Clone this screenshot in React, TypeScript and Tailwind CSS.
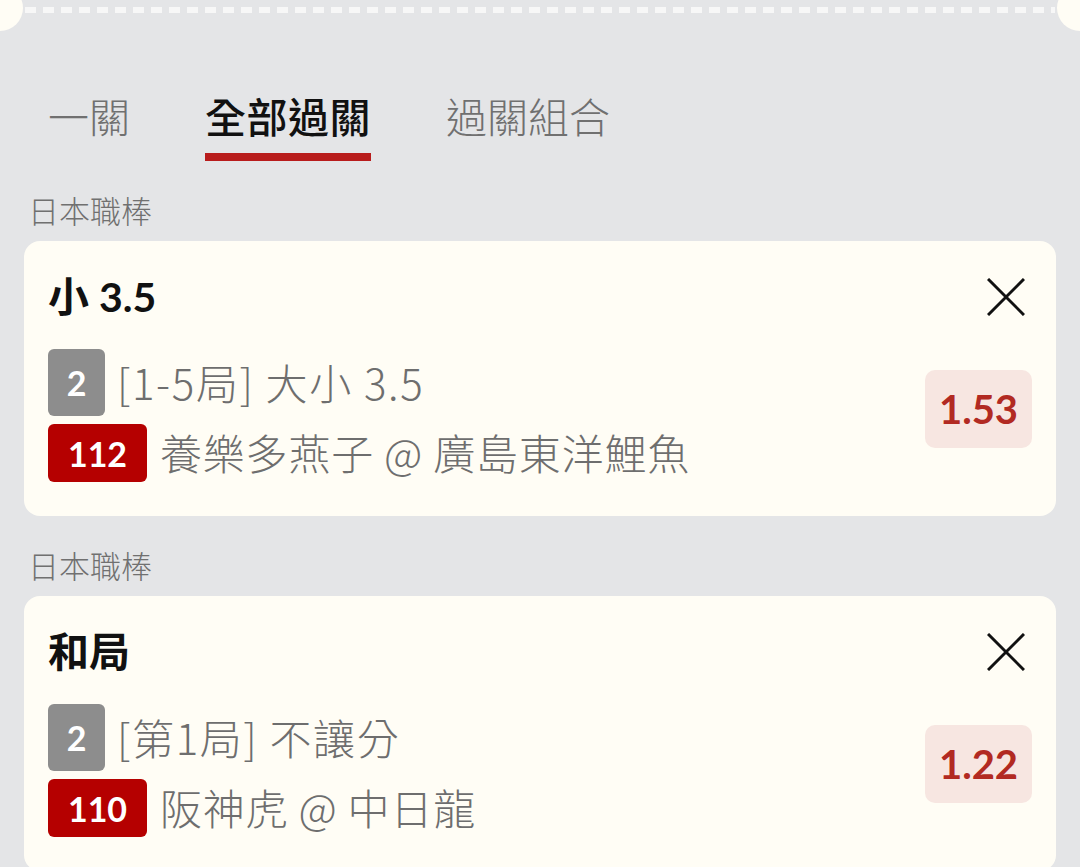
import React from "react";

const FONT = "font-['Lato','Noto_Sans_CJK_TC',sans-serif]";
const CJK = "font-['Noto_Sans_CJK_TC',sans-serif]";

function CloseIcon() {
  return (
    <svg width="38" height="38" viewBox="0 0 38 38" fill="none">
      <path d="M1 1 L37 37 M37 1 L1 37" stroke="#111" strokeWidth="3" />
    </svg>
  );
}

type Bet = {
  title: string;
  line: string;
  num: string;
  match: string;
  odds: string;
};

function BetCard({ bet }: { bet: Bet }) {
  return (
    <div className="mx-6 rounded-[16px] bg-[#fffdf5] px-6 pt-8 pb-[34px]">
      <div className="flex items-center justify-between">
        <div className="text-[41px] leading-[48px] font-bold text-[#111]">{bet.title}</div>
        <div className="mr-[7px] flex h-[38px] w-[38px] items-center justify-center">
          <CloseIcon />
        </div>
      </div>
      <div className="mt-[28px] flex items-start justify-between">
        <div className="flex flex-col gap-[8px]">
          <div className="flex items-center gap-3">
            <div className="flex h-[67px] w-[57px] items-center justify-center rounded-[6px] bg-[#8d8d8d] text-[34px] font-bold text-white">
              2
            </div>
            <div className={`${CJK} -mt-[2px] text-[42px] leading-[50px] font-light tracking-[1.7px] text-[#6e6e6e]`}>{bet.line}</div>
          </div>
          <div className="flex items-center gap-[13px]">
            <div className="flex h-[58px] w-[99px] items-center justify-center rounded-[6px] bg-[#b50000] text-[34px] font-bold text-white">
              {bet.num}
            </div>
            <div className={`${CJK} -mt-[2px] text-[42px] leading-[50px] font-light tracking-[0.8px] text-[#6e6e6e]`}>{bet.match}</div>
          </div>
        </div>
        <div className="mt-[21px] flex h-[78px] w-[107px] items-center justify-center rounded-[10px] bg-[#f7e6e1] text-[40px] font-bold text-[#b22a22]">
          {bet.odds}
        </div>
      </div>
    </div>
  );
}

export default function App() {
  const bets: Bet[] = [
    { title: "小 3.5", line: "[1-5局] 大小 3.5", num: "112", match: "養樂多燕子 @ 廣島東洋鯉魚", odds: "1.53" },
    { title: "和局", line: "[第1局] 不讓分", num: "110", match: "阪神虎 @ 中日龍", odds: "1.22" },
  ];
  return (
    <div className={`${FONT} relative h-[867px] w-full overflow-hidden bg-[#e4e5e7]`}>
      {/* ticket edge */}
      <div className="relative h-[30px]">
        <div className="absolute left-[-23px] top-[-15px] h-[46px] w-[46px] rounded-full bg-[#fffdf5]" />
        <div className="absolute right-[-23px] top-[-15px] h-[46px] w-[46px] rounded-full bg-[#fffdf5]" />
        <div className="absolute left-[25px] right-[25px] top-[7px] h-[6px] bg-[repeating-linear-gradient(to_right,#f7f7f7_0px,#f7f7f7_11px,transparent_11px,transparent_18px)]" />
      </div>

      {/* tabs */}
      <div className={`${CJK} flex items-start gap-[75px] pl-[48px] pt-[61px]`}>
        <div className="text-[41px] leading-[48px] font-light text-[#707070]">一關</div>
        <div className="flex flex-col items-stretch">
          <div className="text-[41px] leading-[48px] font-medium tracking-[0.5px] text-[#111]">全部過關</div>
          <div className="mt-[14px] h-[8px] bg-[#b81c1c]" />
        </div>
        <div className="text-[41px] leading-[48px] font-light text-[#707070]">過關組合</div>
      </div>

      {bets.map((b, i) => (
        <div key={i}>
          <div className={`${CJK} mt-[29px] mb-[11px] pl-[28px] text-[31px] leading-[40px] font-light text-[#707070]`}>
            日本職棒
          </div>
          <BetCard bet={b} />
        </div>
      ))}
    </div>
  );
}
